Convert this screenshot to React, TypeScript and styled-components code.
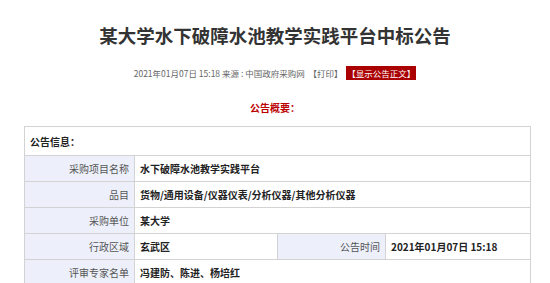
import React from 'react';
import styled, { createGlobalStyle } from 'styled-components';

const GlobalStyle = createGlobalStyle`
  html, body {
    margin: 0;
    padding: 0;
    background: #fff;
  }
  body {
    font-family: "Noto Sans CJK SC", "Liberation Sans", sans-serif;
    color: #333;
  }
`;

const Page = styled.div`
  width: 550px;
  padding-top: 21px;
`;

const Title = styled.h1`
  margin: 0;
  font-size: 18.5px;
  line-height: 28px;
  font-weight: bold;
  color: #333;
  text-align: center;
`;

const Meta = styled.div`
  margin-top: 17px;
  text-align: center;
  font-size: 8.5px;
  line-height: 14px;
  color: #666;
  white-space: pre;
`;

const RedTag = styled.span`
  background: #a00;
  color: #fff;
  padding: 1px 1px;
`;

const Summary = styled.div`
  margin-top: 20px;
  text-align: center;
  font-size: 10px;
  line-height: 16px;
  font-weight: bold;
  color: #b00;
`;

const Table = styled.table`
  margin: 10px 0 0 24px;
  width: 506px;
  border-collapse: collapse;
  table-layout: fixed;
  font-size: 10px;
`;

const Cell = styled.td<{ label?: boolean; head?: boolean }>`
  border: 1px solid #d3d3d3;
  height: ${({ head }) => (head ? '28px' : '25px')};
  padding: 0 5px;
  text-align: ${({ label }) => (label ? 'right' : 'left')};
  background: ${({ label }) => (label ? '#edf0fb' : '#fff')};
  color: ${({ label }) => (label ? '#555' : '#222')};
  font-weight: ${({ label }) => (label ? 'normal' : 'bold')};
  white-space: nowrap;
  overflow: hidden;
`;

const rows: [string, string][] = [
  ['采购项目名称', '水下破障水池教学实践平台'],
  ['品目', '货物/通用设备/仪器仪表/分析仪器/其他分析仪器'],
  ['采购单位', '某大学'],
];

export default function App() {
  return (
    <>
      <GlobalStyle />
      <Page>
        <Title>某大学水下破障水池教学实践平台中标公告</Title>
        <Meta>
          {'2021年01月07日 15:18 来源 : 中国政府采购网  【打印】  '}
          <RedTag>【显示公告正文】</RedTag>
        </Meta>
        <Summary>公告概要：</Summary>
        <Table>
          <colgroup>
            <col style={{ width: 110 }} />
            <col style={{ width: 143 }} />
            <col style={{ width: 108 }} />
            <col style={{ width: 145 }} />
          </colgroup>
          <tbody>
            <tr>
              <Cell head colSpan={4}>公告信息：</Cell>
            </tr>
            {rows.map(([k, v]) => (
              <tr key={k}>
                <Cell label>{k}</Cell>
                <Cell colSpan={3}>{v}</Cell>
              </tr>
            ))}
            <tr>
              <Cell label>行政区域</Cell>
              <Cell>玄武区</Cell>
              <Cell label>公告时间</Cell>
              <Cell>2021年01月07日 15:18</Cell>
            </tr>
            <tr>
              <Cell label>评审专家名单</Cell>
              <Cell colSpan={3}>冯建防、陈进、杨培红</Cell>
            </tr>
          </tbody>
        </Table>
      </Page>
    </>
  );
}
